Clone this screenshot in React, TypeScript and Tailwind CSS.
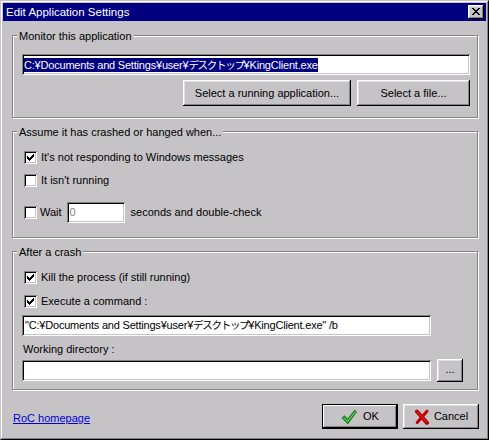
import React from "react";

const raised =
  "shadow-[inset_-1px_-1px_0_#000,inset_1px_1px_0_#fff,inset_-2px_-2px_0_#848284,inset_2px_2px_0_#dfdfdf]";
const sunken =
  "shadow-[inset_1px_1px_0_#848284,inset_-1px_-1px_0_#fff,inset_2px_2px_0_#000,inset_-2px_-2px_0_#c6c3c6]";

function CheckBox({ checked }: { checked?: boolean }) {
  return (
    <div className={"w-[13px] h-[13px] shrink-0 bg-white flex items-center justify-center " + sunken}>
      {checked && (
        <svg width="7" height="7" viewBox="0 0 7 7" shapeRendering="crispEdges">
          <path
            d="M6 0h1v1h-1z M5 1h2v1h-2z M0 2h1v1h-1z M4 2h3v1h-3z M0 3h2v1h-2z M3 3h3v1h-3z M0 4h5v1h-5z M1 5h3v1h-3z M2 6h1v1h-1z"
            fill="#000"
          />
        </svg>
      )}
    </div>
  );
}

function Group({
  label,
  className,
  children,
}: {
  label: string;
  className: string;
  children: React.ReactNode;
}) {
  return (
    <div
      className={
        "relative ml-[9px] w-[466px] border border-[#848284] shadow-[inset_1px_1px_0_#fff,1px_1px_0_#fff] " +
        className
      }
    >
      <span className="absolute top-[-6px] left-[4px] px-[2px] bg-[#c6c3c6] leading-[13px] whitespace-nowrap">
        {label}
      </span>
      {children}
    </div>
  );
}

function Btn({ className, children }: { className: string; children: React.ReactNode }) {
  return (
    <div className={"flex items-center justify-center bg-[#c6c3c6] leading-[13px] " + raised + " " + className}>
      {children}
    </div>
  );
}

const jp = "text-[10.5px] tracking-[-1.3px]";

export default function App() {
  return (
    <div className="w-[489px] h-[440px] bg-[#c6c3c6] text-[11px] text-black font-['Liberation_Sans','Noto_Sans_CJK_JP',sans-serif] border border-t-[#c6c3c6] border-l-[#c6c3c6] border-r-black border-b-black">
      <div className="w-full h-full border border-t-white border-l-white border-r-[#848284] border-b-[#848284] p-[1px] flex flex-col">
        {/* Title bar */}
        <div className="h-[18px] shrink-0 bg-[#000080] flex items-center pl-[3px] pr-[2px]">
          <span className="flex-1 text-white text-[11.5px] leading-[13px] pt-[1px]">Edit Application Settings</span>
          <div className={"w-[16px] h-[14px] bg-[#c6c3c6] flex items-center justify-center " + raised}>
            <svg width="8" height="7" viewBox="0 0 8 7" shapeRendering="crispEdges" className="mb-[1px]">
              <path
                d="M0 0h2v1h-2z M6 0h2v1h-2z M1 1h2v1h-2z M5 1h2v1h-2z M2 2h4v1h-4z M3 3h2v1h-2z M2 4h4v1h-4z M1 5h2v1h-2z M5 5h2v1h-2z M0 6h2v1h-2z M6 6h2v1h-2z"
                fill="#000"
              />
            </svg>
          </div>
        </div>

        {/* Group 1 */}
        <Group label="Monitor this application" className="mt-[14px] h-[83px] pt-[18px] pl-[9px]">
          <div className={"w-[448px] h-[21px] bg-white flex items-center pl-[2px] " + sunken}>
            <span className="bg-[#000080] text-white leading-[14px] whitespace-nowrap tracking-[-0.2px]">
              C:¥Documents and Settings¥user¥<span className={jp}>デスクトップ</span>¥KingClient.exe
            </span>
          </div>
          <div className="w-[448px] mt-[5px] flex justify-end gap-[6px]">
            <Btn className="w-[168px] h-[26px]">Select a running application...</Btn>
            <Btn className="w-[113px] h-[26px]">Select a file...</Btn>
          </div>
        </Group>

        {/* Group 2 */}
        <Group label="Assume it has crashed or hanged when..." className="mt-[13px] h-[107px] pt-[19px] pl-[11px]">
          <div className="h-[13px] flex items-center gap-[4px] leading-[13px]">
            <CheckBox checked />
            <span>It's not responding to Windows messages</span>
          </div>
          <div className="mt-[10px] h-[13px] flex items-center gap-[4px] leading-[13px]">
            <CheckBox />
            <span>It isn't running</span>
          </div>
          <div className="mt-[15px] h-[21px] flex items-center leading-[13px]">
            <CheckBox />
            <span className="ml-[3px]">Wait</span>
            <div className={"ml-[5px] w-[58px] h-[21px] bg-white flex items-center pl-[3px] text-[#848284] " + sunken}>
              0
            </div>
            <span className="ml-[6px]">seconds and double-check</span>
          </div>
        </Group>

        {/* Group 3 */}
        <Group label="After a crash" className="mt-[13px] h-[139px] pt-[19px] pl-[9px]">
          <div className="pl-[2px] h-[13px] flex items-center gap-[4px] leading-[13px]">
            <CheckBox checked />
            <span>Kill the process (if still running)</span>
          </div>
          <div className="pl-[2px] mt-[11px] h-[13px] flex items-center gap-[4px] leading-[13px]">
            <CheckBox checked />
            <span>Execute a command :</span>
          </div>
          <div className={"mt-[7px] w-[409px] h-[21px] bg-white flex items-center pl-[3px] whitespace-nowrap leading-[13px] tracking-[-0.2px] " + sunken}>
            "C:¥Documents and Settings¥user¥<span className={jp}>デスクトップ</span>¥KingClient.exe" /b
          </div>
          <div className="mt-[7px] pl-[1px] leading-[13px]">Working directory :</div>
          <div className="mt-[3px] h-[23px] flex items-center">
            <div className={"w-[409px] h-[21px] bg-white " + sunken} />
            <Btn className="ml-[6px] w-[26px] h-[23px] pb-[2px]">...</Btn>
          </div>
        </Group>

        {/* Footer */}
        <div className="mt-[14px] flex items-start pl-[10px] pr-[7px]">
          <span className="pt-[8px] leading-[13px] text-[#0000dd] underline underline-offset-[1px]">RoC homepage</span>
          <div className="flex-1" />
          <div className="w-[76px] h-[25px] bg-[#c6c3c6] flex items-center justify-center gap-[6px] leading-[13px] shadow-[inset_0_0_0_1px_#000,inset_-2px_-2px_0_#000,inset_2px_2px_0_#fff,inset_-3px_-3px_0_#848284]">
            <svg width="16" height="16" viewBox="0 0 16 16">
              <path
                d="M1 9 L3.5 6.8 L6.5 10.2 L13.8 1.2 L15.5 2.8 L6.8 14.8 Z"
                fill="#1fa31f"
                stroke="#0a5c0a"
                strokeWidth="0.8"
                strokeLinejoin="round"
              />
              <path d="M2.5 8.8 L6.6 12.6 L14.2 2.6" fill="none" stroke="#7fe07f" strokeWidth="0.8" />
            </svg>
            <span>OK</span>
          </div>
          <Btn className="ml-[5px] w-[76px] h-[25px] gap-[4px]">
            <svg width="16" height="16" viewBox="0 0 16 16">
              <path d="M3 2.5 L13 13.8" stroke="#b00000" strokeWidth="4" strokeLinecap="round" />
              <path d="M13 2.2 L3.2 13.5" stroke="#c80000" strokeWidth="3" strokeLinecap="round" />
              <path d="M3.5 3 L12.6 13.2" stroke="#e02020" strokeWidth="1.2" strokeLinecap="round" />
            </svg>
            <span>Cancel</span>
          </Btn>
        </div>
      </div>
    </div>
  );
}
